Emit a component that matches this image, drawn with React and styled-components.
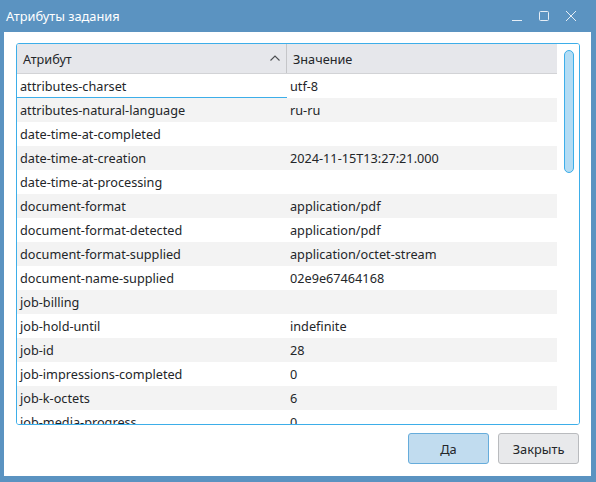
import React from "react";
import styled, { createGlobalStyle } from "styled-components";

const Global = createGlobalStyle`
  html, body { margin: 0; padding: 0; background: #5b93c1; }
  body { font-family: "Noto Sans", "DejaVu Sans", sans-serif; }
  * { box-sizing: border-box; }
`;

const Window = styled.div`
  width: 596px;
  height: 482px;
  background: #5b93c1;
  display: flex;
  flex-direction: column;
`;

const TitleBar = styled.div`
  height: 32px;
  display: flex;
  align-items: center;
  padding: 0 0 0 6px;
  color: #ffffff;
  font-size: 12.8px;
`;

const Title = styled.div`
  flex: 1;
  margin-top: -1px;
`;

const TitleButtons = styled.div`
  display: flex;
  align-items: center;
  margin-right: 12px;
`;

const TitleBtn = styled.div`
  width: 27px;
  height: 24px;
  display: flex;
  align-items: center;
  justify-content: center;
`;

const Body = styled.div`
  flex: 1;
  background: #ffffff;
  margin: 0 5px 6px 4px;
  padding: 11px 11px 12px 12px;
  display: flex;
  flex-direction: column;
`;

const TableFrame = styled.div`
  height: 382px;
  border: 1px solid #3daee9;
  border-radius: 3px;
  display: flex;
  overflow: hidden;
`;

const TableArea = styled.div`
  width: 540px;
  display: flex;
  flex-direction: column;
  overflow: hidden;
`;

const HeaderRow = styled.div`
  height: 30px;
  flex: none;
  display: flex;
  background: #e6e7eb;
  border-bottom: 1px solid #d2d3d6;
  color: #232629;
  font-size: 12.7px;
`;

const HeaderCell = styled.div`
  width: ${(p) => p.$w}px;
  flex: ${(p) => (p.$w ? "none" : "1")};
  display: flex;
  align-items: center;
  padding-left: ${(p) => p.$pl}px;
  border-right: ${(p) => (p.$divider ? "1px solid #c5c6c9" : "none")};
  position: relative;
`;

const SortIcon = styled.svg`
  position: absolute;
  right: 6px;
  top: 11px;
`;

const Row = styled.div`
  height: 24px;
  flex: none;
  display: flex;
  background: ${(p) => (p.$alt ? "#f3f3f3" : "#ffffff")};
  color: #232629;
  font-size: 12.7px;
`;

const Cell = styled.div`
  width: ${(p) => p.$w}px;
  flex: ${(p) => (p.$w ? "none" : "1")};
  display: flex;
  align-items: center;
  padding-left: ${(p) => p.$pl}px;
  white-space: nowrap;
  border-bottom: ${(p) => (p.$focus ? "1px solid #3daee9" : "1px solid transparent")};
  padding-top: 1px;
`;

const ScrollTrack = styled.div`
  flex: 1;
  background: #ffffff;
  display: flex;
  justify-content: center;
  padding-top: 6px;
`;

const ScrollHandle = styled.div`
  width: 10px;
  height: 123px;
  margin-left: 2px;
  background: #b3dcf4;
  border: 1px solid #3daee9;
  border-radius: 5px;
`;

const Footer = styled.div`
  display: flex;
  justify-content: flex-end;
  gap: 9px;
  margin-top: 8px;
  padding-right: 1px;
`;

const Button = styled.button`
  width: 81px;
  height: 31px;
  border-radius: 3px;
  font-family: "Noto Sans", "DejaVu Sans", sans-serif;
  font-size: 12.8px;
  color: #232629;
  background: ${(p) => (p.$primary ? "#c1dcef" : "#e8e9eb")};
  border: 1px solid ${(p) => (p.$primary ? "#66acdb" : "#b9bbbe")};
  padding: 0;
`;

const rows = [
  ["attributes-charset", "utf-8"],
  ["attributes-natural-language", "ru-ru"],
  ["date-time-at-completed", ""],
  ["date-time-at-creation", "2024-11-15T13:27:21.000"],
  ["date-time-at-processing", ""],
  ["document-format", "application/pdf"],
  ["document-format-detected", "application/pdf"],
  ["document-format-supplied", "application/octet-stream"],
  ["document-name-supplied", "02e9e67464168"],
  ["job-billing", ""],
  ["job-hold-until", "indefinite"],
  ["job-id", "28"],
  ["job-impressions-completed", "0"],
  ["job-k-octets", "6"],
  ["job-media-progress", "0"],
];

export default function App() {
  return (
    <>
      <Global />
      <Window>
        <TitleBar>
          <Title>Атрибуты задания</Title>
          <TitleButtons>
            <TitleBtn>
              <svg width="12" height="12" viewBox="0 0 12 12">
                <line x1="1" y1="10.5" x2="11" y2="10.5" stroke="#e6eef6" strokeWidth="1" />
              </svg>
            </TitleBtn>
            <TitleBtn>
              <svg width="12" height="12" viewBox="0 0 12 12">
                <rect x="1.5" y="1.5" width="9" height="9" rx="1" fill="none" stroke="#e6eef6" strokeWidth="1" />
              </svg>
            </TitleBtn>
            <TitleBtn>
              <svg width="12" height="12" viewBox="0 0 12 12">
                <path d="M1 1 L11 11 M11 1 L1 11" stroke="#e6eef6" strokeWidth="1" />
              </svg>
            </TitleBtn>
          </TitleButtons>
        </TitleBar>
        <Body>
          <TableFrame>
            <TableArea>
              <HeaderRow>
                <HeaderCell $w={270} $pl={6} $divider>
                  Атрибут
                  <SortIcon width="10" height="6" viewBox="0 0 10 6">
                    <path d="M0.5 5.5 L5 1 L9.5 5.5" fill="none" stroke="#4d4f52" strokeWidth="1.1" />
                  </SortIcon>
                </HeaderCell>
                <HeaderCell $pl={6}>Значение</HeaderCell>
              </HeaderRow>
              {rows.map(([k, v], i) => (
                <Row key={k} $alt={i % 2 === 1}>
                  <Cell $w={270} $pl={3} $focus={i === 0}>{k}</Cell>
                  <Cell $pl={3}>{v}</Cell>
                </Row>
              ))}
            </TableArea>
            <ScrollTrack>
              <ScrollHandle />
            </ScrollTrack>
          </TableFrame>
          <Footer>
            <Button $primary>Да</Button>
            <Button>Закрыть</Button>
          </Footer>
        </Body>
      </Window>
    </>
  );
}
